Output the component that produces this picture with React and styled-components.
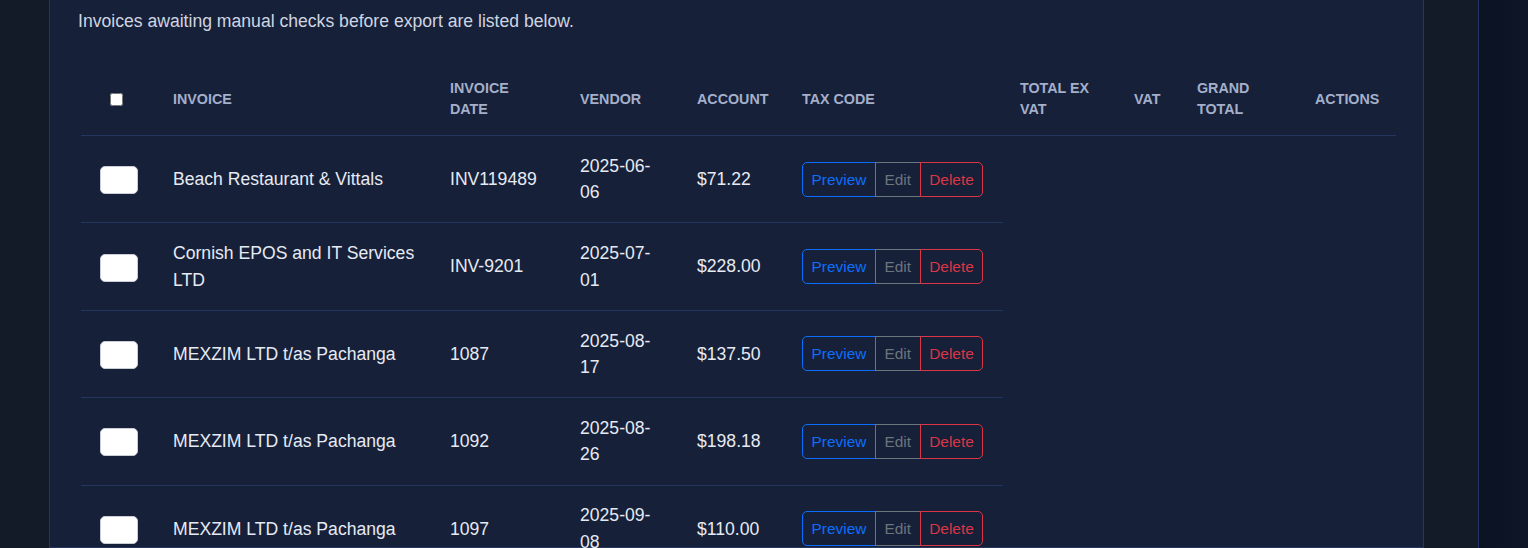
import React from 'react';
import styled, { createGlobalStyle } from 'styled-components';

const GlobalStyle = createGlobalStyle`
    html, body {
        margin: 0;
        padding: 0;
        background: #121a27;
        font-family: "Liberation Sans", Arial, sans-serif;
        overflow: hidden;
    }
`;

const columns = [
    { key: 'select', width: 75 },
    { key: 'invoice', label: 'Invoice', width: 277 },
    { key: 'date', label: 'Invoice Date', width: 130 },
    { key: 'vendor', label: 'Vendor', width: 117 },
    { key: 'account', label: 'Account', width: 105 },
    { key: 'tax', label: 'Tax Code', width: 218 },
    { key: 'net', label: 'Total Ex VAT', width: 114 },
    { key: 'vat', label: 'VAT', width: 63 },
    { key: 'gross', label: 'Grand Total', width: 118 },
    { key: 'actions', label: 'Actions', width: 98 },
];

const invoices = [
    { id: 1, vendor: 'Beach Restaurant & Vittals', number: 'INV119489', date: '2025-06-06', total: '$71.22' },
    { id: 2, vendor: 'Cornish EPOS and IT Services LTD', number: 'INV-9201', date: '2025-07-01', total: '$228.00' },
    { id: 3, vendor: 'MEXZIM LTD t/as Pachanga', number: '1087', date: '2025-08-17', total: '$137.50' },
    { id: 4, vendor: 'MEXZIM LTD t/as Pachanga', number: '1092', date: '2025-08-26', total: '$198.18' },
    { id: 5, vendor: 'MEXZIM LTD t/as Pachanga', number: '1097', date: '2025-09-08', total: '$110.00' },
];

const App = () => {
  return (
    <>
        <GlobalStyle />
        <Shell>
            <Main>
                <Card>
                    <Lead>Invoices awaiting manual checks before export are listed below.</Lead>
                    <Table>
                        <thead>
                            <tr>
                                {columns.map((col) => (
                                    <Th key={col.key} $width={col.width} $center={col.key === 'select'}>
                                        {col.key === 'select' ? <HeadCheck type="checkbox" /> : col.label}
                                    </Th>
                                ))}
                            </tr>
                        </thead>
                        <tbody>
                            {invoices.map((inv) => (
                                <tr key={inv.id}>
                                    <Td $center>
                                        <RowCheck type="checkbox" />
                                    </Td>
                                    <Td>{inv.vendor}</Td>
                                    <Td>{inv.number}</Td>
                                    <Td>{inv.date}</Td>
                                    <Td>{inv.total}</Td>
                                    <Td>
                                        <BtnGroup>
                                            <OutlineButton $tone="#0d6efd">Preview</OutlineButton>
                                            <OutlineButton $tone="#6c757d">Edit</OutlineButton>
                                            <OutlineButton $tone="#dc3545">Delete</OutlineButton>
                                        </BtnGroup>
                                    </Td>
                                </tr>
                            ))}
                        </tbody>
                    </Table>
                </Card>
            </Main>
            <Sidebar />
        </Shell>
    </>
  )
}

export default App;

const Shell = styled.div`
    display: flex;
    height: 100vh;
    overflow: hidden;
`;

const Main = styled.main`
    flex: 1;
    min-width: 0;
    display: flex;
    padding: 0 54px 0 49px;
    background: #131b29;
`;

const Card = styled.section`
    flex: 1;
    min-width: 0;
    background: #162039;
    border: 1px solid #27365a;
    border-top: none;
    padding: 8px 27px 0 28px;
`;

const Lead = styled.p`
    margin: 0 0 29.6px;
    font-size: 17.6px;
    line-height: 26.4px;
    color: #cfd5e1;
`;

const Table = styled.table`
    table-layout: fixed;
    width: 1315px;
    margin-left: 3px;
    border-collapse: collapse;
    color: #e6eaf3;
`;

const Th = styled.th`
    box-sizing: border-box;
    width: ${(p) => p.$width}px;
    padding: 14px 17px;
    font-size: 14.3px;
    line-height: 21.45px;
    font-weight: 700;
    text-transform: uppercase;
    text-align: ${(p) => (p.$center ? 'center' : 'left')};
    vertical-align: middle;
    color: #a4afca;
    border-bottom: 1px solid #22365f;
`;

const Td = styled.td`
    padding: 16.8px 17px;
    font-size: 17.6px;
    line-height: 26.4px;
    vertical-align: middle;
    text-align: ${(p) => (p.$center ? 'center' : 'left')};
    border-bottom: 1px solid #22365f;
`;

const HeadCheck = styled.input`
    width: 13px;
    height: 13px;
    margin: 0 4px 0 0;
    vertical-align: middle;
`;

const RowCheck = styled.input`
    appearance: none;
    display: block;
    width: 38px;
    height: 28px;
    margin: 2px auto 0;
    background: #ffffff;
    border: 1px solid #c9ced6;
    border-radius: 5px;
`;

const BtnGroup = styled.div`
    display: inline-flex;
`;

const OutlineButton = styled.button`
    all: unset;
    position: relative;
    padding: 5px 8.6px;
    font-family: "Liberation Sans", Arial, sans-serif;
    font-size: 15.4px;
    line-height: 23.1px;
    color: ${(p) => p.$tone};
    border: 1px solid ${(p) => p.$tone};
    background: transparent;
    cursor: pointer;

    & + & {
        margin-left: -1px;
    }
    &:first-child {
        border-radius: 5px 0 0 5px;
    }
    &:last-child {
        border-radius: 0 5px 5px 0;
    }
`;

const Sidebar = styled.aside`
    width: 49px;
    flex-shrink: 0;
    border-left: 1px solid #213566;
    background: linear-gradient(90deg, #0b1223, #0e1628);
`;
